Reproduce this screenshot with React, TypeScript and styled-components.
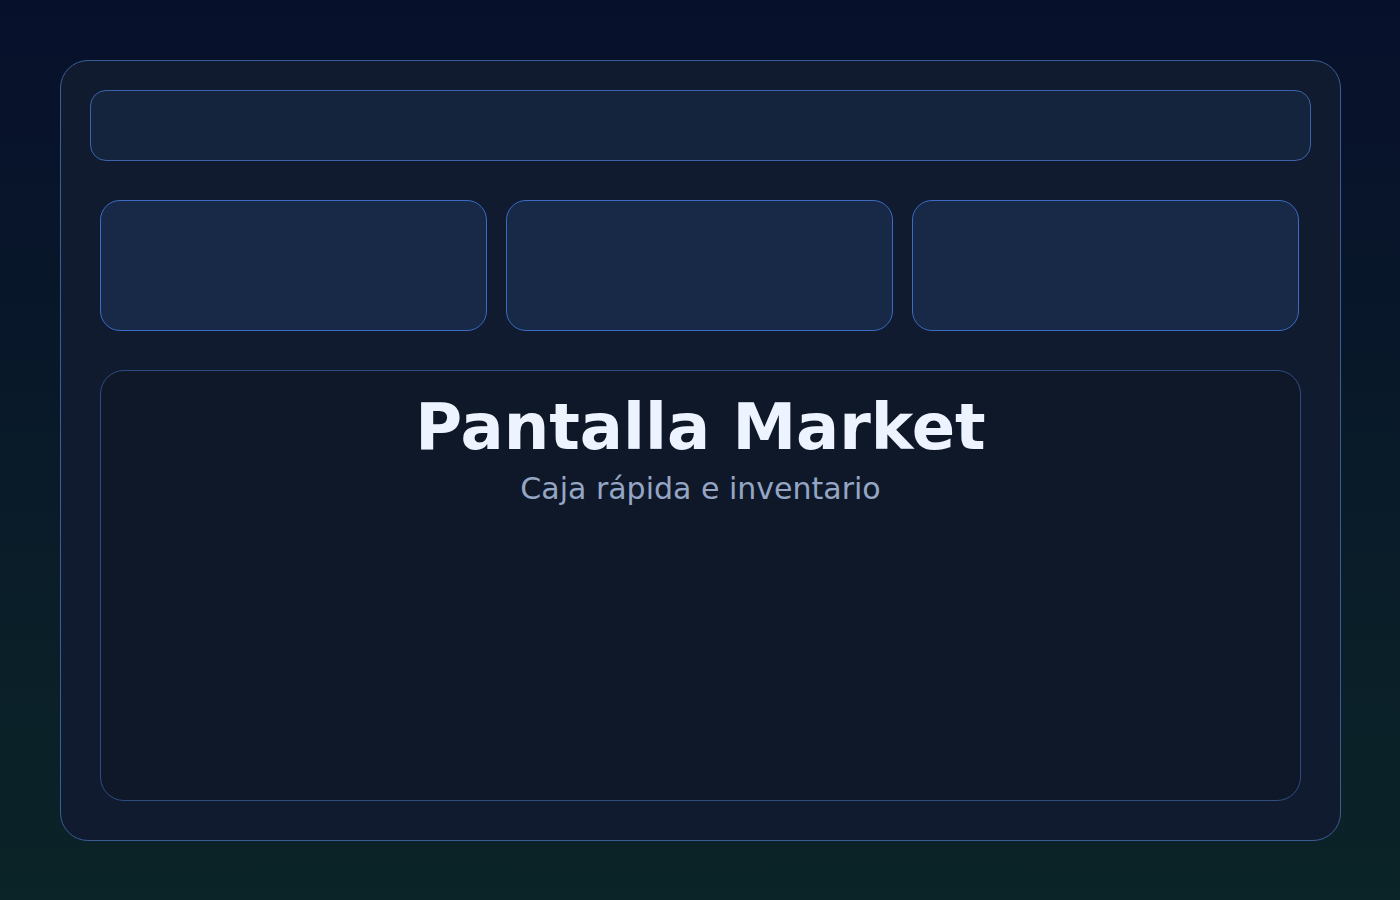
import React from "react";
import styled, { createGlobalStyle } from "styled-components";

const GlobalStyle = createGlobalStyle`
    html, body {
        margin: 0;
        padding: 0;
    }
    body {
        font-family: "DejaVu Sans", "Liberation Sans", sans-serif;
        background: linear-gradient(180deg, #07102b 0%, #0b2427 100%);
        min-height: 900px;
    }
`;

const Page = styled.div`
    box-sizing: border-box;
    width: 1400px;
    height: 900px;
    padding: 60px;
`;

const Frame = styled.div`
    box-sizing: border-box;
    width: 1281px;
    height: 781px;
    padding: 29px 29px 39px;
    display: flex;
    flex-direction: column;
    gap: 39px;
    background: #111b30;
    border: 1px solid #3b5d96;
    border-radius: 28px;
`;

const TopBar = styled.div`
    box-sizing: border-box;
    height: 71px;
    background: #14243d;
    border: 1px solid #3a63a8;
    border-radius: 16px;
`;

const Body = styled.div`
    flex: 1;
    display: flex;
    flex-direction: column;
    gap: 39px;
    padding: 0 10px;
`;

const CardRow = styled.div`
    display: grid;
    grid-template-columns: repeat(3, 387px);
    gap: 19px;
`;

const Card = styled.div`
    box-sizing: border-box;
    height: 131px;
    background: #172947;
    border: 1px solid #3b6bc2;
    border-radius: 20px;
`;

const Panel = styled.div`
    box-sizing: border-box;
    flex: 1;
    padding-top: 19px;
    display: flex;
    flex-direction: column;
    align-items: center;
    background: #0f1829;
    border: 1px solid #2f4c80;
    border-radius: 24px;
`;

const Title = styled.h1`
    margin: 0;
    font-size: 64px;
    font-weight: 700;
    color: #eef4ff;
`;

const Subtitle = styled.p`
    margin: 7px 0 0;
    font-size: 30px;
    color: #94a6c4;
`;

const App: React.FC = (): JSX.Element => {
    return (
        <>
            <GlobalStyle />
            <Page>
                <Frame>
                    <TopBar />
                    <Body>
                        <CardRow>
                            <Card />
                            <Card />
                            <Card />
                        </CardRow>
                        <Panel>
                            <Title>Pantalla Market</Title>
                            <Subtitle>Caja rápida e inventario</Subtitle>
                        </Panel>
                    </Body>
                </Frame>
            </Page>
        </>
    );
};

export default App;
